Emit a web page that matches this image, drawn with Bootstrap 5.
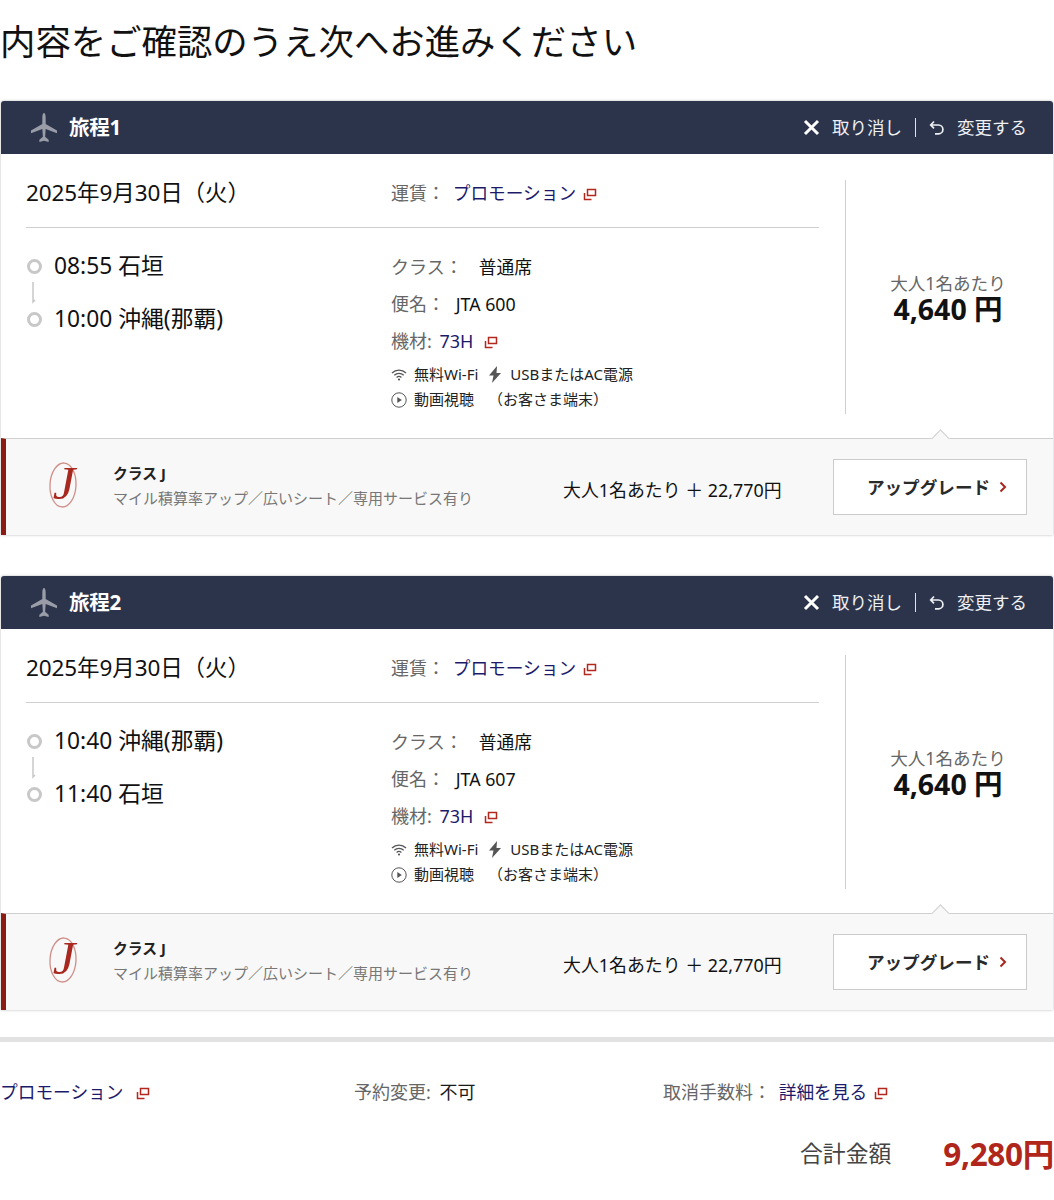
<!DOCTYPE html>
<html lang="ja">
<head>
<meta charset="utf-8">
<title>内容をご確認のうえ次へお進みください</title>
<link rel="stylesheet" href="https://cdn.jsdelivr.net/npm/bootstrap@5.3.0/dist/css/bootstrap.min.css">
<style>
body{font-family:"Noto Sans","Noto Sans CJK JP",sans-serif;color:#1a1a1a;background:#fff;width:1054px;overflow-x:hidden}
.pg-title{font-size:35.4px;font-weight:400;line-height:48px;margin:17px 0 36px 0;height:48px;color:#111}
.trip{margin:0 1px 41px 1px;height:434px;border-radius:3px 3px 0 0;box-shadow:0 0 3px rgba(0,0,0,.28);background:#fff}
.trip-head{height:53px;background:#2b344b;color:#fff;padding:0 26px 0 30px;border-radius:3px 3px 0 0}
.trip-name{font-size:20.5px;font-weight:700;margin-left:12px;letter-spacing:-.2px}
.trip-act{font-size:17.5px;color:#eef0f4}
.act-sep{width:1px;height:19px;background:#dfe2e8;margin:0 13px 0 13px}
.trip-body{height:284px}
.trip-main{width:844px;padding:25px 26px 0 25px}
.date-row{height:49px;border-bottom:1px solid #cfcfcf}
.col-time{width:365px;flex:none}
.date-txt{font-size:22.5px;line-height:28px;color:#111;letter-spacing:-.1px}
.lab{color:#666}
.fare-row{font-size:18px;line-height:28px}
.lnk{color:#1b1a6b;text-decoration:none}
.lnk-s{font-size:17.7px}
.lk3{margin-left:3px}
.ic2{margin-left:2px}
.ic6{margin-left:6px}
.times{padding-top:23px;font-size:22.8px;color:#111}
.time-line{height:30px;line-height:30px}
.dot{width:15px;height:15px;border:3px solid #c8c8c8;border-radius:50%;margin:0 12px 0 1px;flex:none}
.conn{height:23px;margin-left:5px;display:block}
.detail{padding-top:21px}
.d1{font-size:18px;line-height:37px}
.d1 .val{color:#111;font-size:17.8px}
.val-j{margin-left:6px}
.amen{font-size:15px;line-height:25px;color:#222}
.amen-first{margin-top:2px}
.am-ic{margin-right:7px}
.am-note{margin-left:14px}
.bolt{margin-left:10px}
.price-col{width:208px;margin-top:26px;height:234px;border-left:1px solid #cfcfcf;text-align:center;padding:3px 3px 0 0}
.per{font-size:17.6px;color:#666;line-height:22px}
.amt{font-size:28.5px;font-weight:700;line-height:31px;color:#111}
.upsell{height:97px;background:#f8f8f8;border-top:1px solid #cfcfcf;border-left:5px solid #8c1c13;position:relative;padding:0 26px 0 0}
.upsell::before{content:"";position:absolute;right:106px;top:-7px;width:13px;height:13px;background:#f8f8f8;border-left:1px solid #cfcfcf;border-top:1px solid #cfcfcf;transform:rotate(45deg)}
.logo-j{width:107px;flex:none;padding-left:38px}
.logo-j svg{overflow:visible;display:block}
.up-info{width:450px;flex:none;padding-bottom:3px}
.cls-name{font-size:14.8px;font-weight:700;line-height:25px;color:#222}
.cls-desc{font-size:15px;color:#777;line-height:24px}
.up-price{font-size:17.9px;color:#111;width:270px;flex:none;padding-top:7px}
.btn-up{width:194px;height:56px;background:#fff;border:1px solid #cbcbcb;border-radius:0;font-size:17.6px;font-weight:700;color:#2a2a2a;padding:0 0 0 14px}
.chev{margin-left:9px}
.rule{height:5px;background:#e2e2e2;margin-top:-14px}
.foot{height:92px;padding-top:37px;font-size:18px}
.foot-a{width:354px;flex:none}
.foot-b{width:309px;flex:none}
.total{font-size:22.8px;color:#444;height:40px}
.total-v{font-size:31.5px;font-weight:700;color:#b0261b;margin-left:52px;letter-spacing:-.3px}
.xi{vertical-align:-1px}
</style>
</head>
<body>
<h1 class="pg-title">内容をご確認のうえ次へお進みください</h1>

<section class="trip">
  <div class="trip-head d-flex align-items-center">
    <svg width="26" height="29" viewBox="1 1 28 28" preserveAspectRatio="none"><path fill="#9a9da8" d="M15 1c1 0 1.800 2 1.800 4v6.500L29 18v2.500l-12.200-4-.6 7.500 3.800 2.800V29L15 27.800 10 29v-2.200l3.800-2.800-.6-7.500L1 20.500V18l12.200-6.500V5c0-2 .8-4 1.800-4z"/></svg>
    <span class="trip-name">旅程1</span>
    <div class="trip-act d-flex align-items-center ms-auto">
      <svg width="17" height="17" viewBox="0 0 17 17" class="me-2"><path stroke="#fff" stroke-width="3" d="M2 2l13 13M15 2L2 15"/></svg>
      <span class="ms-1">取り消し</span><span class="act-sep"></span>
      <svg width="16" height="16" viewBox="0 0 16 16" class="me-2"><path fill="none" stroke="#eef0f4" stroke-width="1.700" d="M5 1.500L1.700 5 5 8.300M2 5h7.500a4.300 4.300 0 0 1 0 8.800H6"/></svg>
      <span class="ms-1">変更する</span>
    </div>
  </div>
  <div class="trip-body d-flex">
    <div class="trip-main">
      <div class="date-row d-flex">
        <div class="col-time date-txt">2025年9月30日（火）</div>
        <div class="fare-row"><span class="lab">運賃：</span> <a class="lnk lnk-s lk3" href="#">プロモーション</a>
          <svg class="ic2 xi" width="14" height="13" viewBox="0 0 14 13"><path fill="none" stroke="#b3281d" stroke-width="1.500" d="M4.500 1.500h8v6h-8zM1.500 5v6.500h7"/></svg></div>
      </div>
      <div class="d-flex">
        <div class="col-time times">
          <div class="time-line d-flex align-items-center"><span class="dot"></span>08:55 石垣</div>
          <svg class="conn" width="8" height="23" viewBox="0 0 8 23"><path fill="none" stroke="#c8c8c8" stroke-width="1.500" d="M2 1v20l2-2"/></svg>
          <div class="time-line d-flex align-items-center"><span class="dot"></span>10:00 沖縄(那覇)</div>
        </div>
        <div class="detail">
          <div class="d1"><span class="lab">クラス：</span><span class="val ms-3">普通席</span></div>
          <div class="d1"><span class="lab">便名：</span> <span class="val val-j">JTA 600</span></div>
          <div class="d1"><span class="lab">機材:</span> <a class="lnk lk3" href="#">73H</a>
            <svg class="ic6 xi" width="14" height="13" viewBox="0 0 14 13"><path fill="none" stroke="#b3281d" stroke-width="1.500" d="M4.500 1.500h8v6h-8zM1.500 5v6.500h7"/></svg></div>
          <div class="amen amen-first d-flex align-items-center">
            <svg width="16" height="12" viewBox="0 0 16 12" class="am-ic"><path fill="none" stroke="#555" stroke-width="1.300" d="M1 4a10 10 0 0 1 14 0M3.300 6.300a6.800 6.800 0 0 1 9.400 0M5.600 8.500a3.500 3.500 0 0 1 4.800 0"/><circle cx="8" cy="10.500" r="1.100" fill="#555"/></svg>
            <span>無料Wi-Fi</span>
            <svg width="14" height="17" viewBox="0 0 14 17" class="bolt me-1"><path fill="#555" d="M9 0L1 9.500h4.500L4 17l9-10H8.500z"/></svg>
            <span class="ms-1">USBまたはAC電源</span>
          </div>
          <div class="amen d-flex align-items-center">
            <svg width="16" height="16" viewBox="0 0 16 16" class="am-ic"><circle cx="8" cy="8" r="7.200" fill="none" stroke="#555"/><path fill="#555" d="M6.300 5l4.500 3-4.500 3z"/></svg>
            <span>動画視聴</span><span class="am-note">（お客さま端末）</span>
          </div>
        </div>
      </div>
    </div>
    <div class="price-col d-flex flex-column justify-content-center">
      <div class="per">大人1名あたり</div>
      <div class="amt">4,640 円</div>
    </div>
  </div>
  <div class="upsell d-flex align-items-center">
    <div class="logo-j">
      <svg width="36" height="48" viewBox="0 0 36 48"><ellipse cx="19" cy="22" rx="13" ry="22" fill="none" stroke="#cf8f89" stroke-width="1.300" transform="rotate(3 19 22)"/><text transform="translate(20 36) scale(1.100 1)" text-anchor="middle" font-family="Liberation Serif" font-style="italic" font-size="46" fill="#a8271e">J</text></svg>
    </div>
    <div class="up-info">
      <div class="cls-name">クラス J</div>
      <div class="cls-desc">マイル積算率アップ／広いシート／専用サービス有り</div>
    </div>
    <div class="up-price">大人1名あたり ＋ 22,770円</div>
    <button type="button" class="btn btn-up d-flex align-items-center justify-content-center">アップグレード<svg class="chev" width="8" height="12" viewBox="0 0 8 12"><path fill="none" stroke="#a8271e" stroke-width="2" d="M1.500 1.500L6 6l-4.500 4.500"/></svg></button>
  </div>
</section>

<section class="trip">
  <div class="trip-head d-flex align-items-center">
    <svg width="26" height="29" viewBox="1 1 28 28" preserveAspectRatio="none"><path fill="#9a9da8" d="M15 1c1 0 1.800 2 1.800 4v6.500L29 18v2.500l-12.200-4-.6 7.500 3.800 2.800V29L15 27.800 10 29v-2.200l3.800-2.800-.6-7.500L1 20.500V18l12.200-6.500V5c0-2 .8-4 1.800-4z"/></svg>
    <span class="trip-name">旅程2</span>
    <div class="trip-act d-flex align-items-center ms-auto">
      <svg width="17" height="17" viewBox="0 0 17 17" class="me-2"><path stroke="#fff" stroke-width="3" d="M2 2l13 13M15 2L2 15"/></svg>
      <span class="ms-1">取り消し</span><span class="act-sep"></span>
      <svg width="16" height="16" viewBox="0 0 16 16" class="me-2"><path fill="none" stroke="#eef0f4" stroke-width="1.700" d="M5 1.500L1.700 5 5 8.300M2 5h7.500a4.300 4.300 0 0 1 0 8.800H6"/></svg>
      <span class="ms-1">変更する</span>
    </div>
  </div>
  <div class="trip-body d-flex">
    <div class="trip-main">
      <div class="date-row d-flex">
        <div class="col-time date-txt">2025年9月30日（火）</div>
        <div class="fare-row"><span class="lab">運賃：</span> <a class="lnk lnk-s lk3" href="#">プロモーション</a>
          <svg class="ic2 xi" width="14" height="13" viewBox="0 0 14 13"><path fill="none" stroke="#b3281d" stroke-width="1.500" d="M4.500 1.500h8v6h-8zM1.500 5v6.500h7"/></svg></div>
      </div>
      <div class="d-flex">
        <div class="col-time times">
          <div class="time-line d-flex align-items-center"><span class="dot"></span>10:40 沖縄(那覇)</div>
          <svg class="conn" width="8" height="23" viewBox="0 0 8 23"><path fill="none" stroke="#c8c8c8" stroke-width="1.500" d="M2 1v20l2-2"/></svg>
          <div class="time-line d-flex align-items-center"><span class="dot"></span>11:40 石垣</div>
        </div>
        <div class="detail">
          <div class="d1"><span class="lab">クラス：</span><span class="val ms-3">普通席</span></div>
          <div class="d1"><span class="lab">便名：</span> <span class="val val-j">JTA 607</span></div>
          <div class="d1"><span class="lab">機材:</span> <a class="lnk lk3" href="#">73H</a>
            <svg class="ic6 xi" width="14" height="13" viewBox="0 0 14 13"><path fill="none" stroke="#b3281d" stroke-width="1.500" d="M4.500 1.500h8v6h-8zM1.500 5v6.500h7"/></svg></div>
          <div class="amen amen-first d-flex align-items-center">
            <svg width="16" height="12" viewBox="0 0 16 12" class="am-ic"><path fill="none" stroke="#555" stroke-width="1.300" d="M1 4a10 10 0 0 1 14 0M3.300 6.300a6.800 6.800 0 0 1 9.400 0M5.600 8.500a3.500 3.500 0 0 1 4.800 0"/><circle cx="8" cy="10.500" r="1.100" fill="#555"/></svg>
            <span>無料Wi-Fi</span>
            <svg width="14" height="17" viewBox="0 0 14 17" class="bolt me-1"><path fill="#555" d="M9 0L1 9.500h4.500L4 17l9-10H8.500z"/></svg>
            <span class="ms-1">USBまたはAC電源</span>
          </div>
          <div class="amen d-flex align-items-center">
            <svg width="16" height="16" viewBox="0 0 16 16" class="am-ic"><circle cx="8" cy="8" r="7.200" fill="none" stroke="#555"/><path fill="#555" d="M6.300 5l4.500 3-4.500 3z"/></svg>
            <span>動画視聴</span><span class="am-note">（お客さま端末）</span>
          </div>
        </div>
      </div>
    </div>
    <div class="price-col d-flex flex-column justify-content-center">
      <div class="per">大人1名あたり</div>
      <div class="amt">4,640 円</div>
    </div>
  </div>
  <div class="upsell d-flex align-items-center">
    <div class="logo-j">
      <svg width="36" height="48" viewBox="0 0 36 48"><ellipse cx="19" cy="22" rx="13" ry="22" fill="none" stroke="#cf8f89" stroke-width="1.300" transform="rotate(3 19 22)"/><text transform="translate(20 36) scale(1.100 1)" text-anchor="middle" font-family="Liberation Serif" font-style="italic" font-size="46" fill="#a8271e">J</text></svg>
    </div>
    <div class="up-info">
      <div class="cls-name">クラス J</div>
      <div class="cls-desc">マイル積算率アップ／広いシート／専用サービス有り</div>
    </div>
    <div class="up-price">大人1名あたり ＋ 22,770円</div>
    <button type="button" class="btn btn-up d-flex align-items-center justify-content-center">アップグレード<svg class="chev" width="8" height="12" viewBox="0 0 8 12"><path fill="none" stroke="#a8271e" stroke-width="2" d="M1.500 1.500L6 6l-4.500 4.500"/></svg></button>
  </div>
</section>

<div class="rule"></div>
<div class="foot d-flex">
  <div class="foot-a"><a class="lnk lnk-s" href="#">プロモーション</a>
    <svg class="ms-2 xi" width="14" height="13" viewBox="0 0 14 13"><path fill="none" stroke="#b3281d" stroke-width="1.500" d="M4.500 1.500h8v6h-8zM1.500 5v6.500h7"/></svg></div>
  <div class="foot-b"><span class="lab">予約変更:</span> <span class="ms-1">不可</span></div>
  <div><span class="lab">取消手数料：</span> <a class="lnk lnk-s lk3" href="#">詳細を見る</a>
    <svg class="ic2 xi" width="14" height="13" viewBox="0 0 14 13"><path fill="none" stroke="#b3281d" stroke-width="1.500" d="M4.500 1.500h8v6h-8zM1.500 5v6.500h7"/></svg></div>
</div>
<div class="total d-flex align-items-center justify-content-end">合計金額<span class="total-v">9,280円</span></div>
</body>
</html>
